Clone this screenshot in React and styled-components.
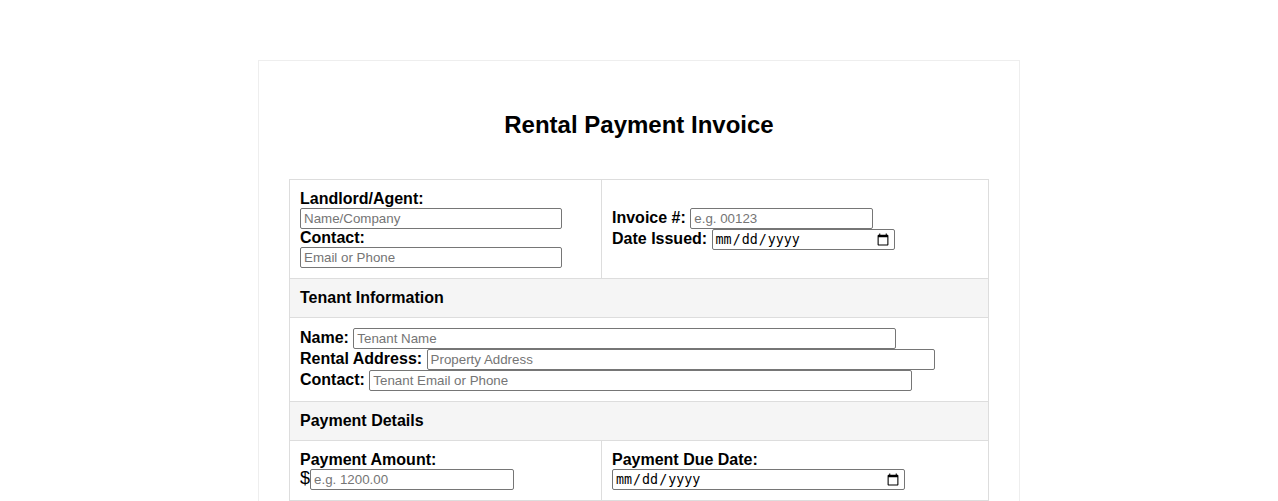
import styled, { createGlobalStyle } from 'styled-components';

const GlobalStyle = createGlobalStyle`
  body {
    margin: 0;
    font-family: "Liberation Sans", Arial, sans-serif;
    color: #000;
    background: #fff;
  }
`

const Page = styled.div`
  padding-top: 60px;
`

const Invoice = styled.div`
  width: 700px;
  margin: 0 auto;
  padding: 30px;
  border: 1px solid #eee;
`

const Title = styled.h2`
  text-align: center;
  font-size: 24px;
  font-weight: bold;
  margin: 20px 0 40px;
`

const Table = styled.table`
  width: 699px;
  border-collapse: collapse;
  table-layout: fixed;
`

const Col = styled.col`
  width: ${p => p.$w}px;
`

const Cell = styled.td`
  border: 1px solid #ddd;
  padding: 10px;
  vertical-align: middle;
  font-size: 16px;
`

const Section = styled.th`
  border: 1px solid #ddd;
  padding: 10px;
  background: #f5f5f5;
  text-align: left;
  font-size: 16px;
  font-weight: bold;
`

const Line = styled.div`
  display: block;
`

const Label = styled.label`
  font-weight: bold;
`

const TextInput = styled.input`
  width: ${p => p.$w};
  box-sizing: border-box;
  height: 21px;
  font-family: "Liberation Sans", Arial, sans-serif;
  font-size: 13.333px;
  padding: 1px 3px;
  border: 1px solid #767676;
  border-radius: 2px;
  vertical-align: baseline;

  &::placeholder {
    color: #757575;
  }
`

const DateInput = styled.input`
  width: ${p => p.$w};
  box-sizing: border-box;
  height: 21px;
  border: 1px solid #767676;
  border-radius: 2px;
  padding: 1px 2px;
`

const Dollar = styled.span`
  font-size: 18px;
  line-height: 1;
`

const App = () => {
  return (
    <Page>
      <GlobalStyle />
      <Invoice>
        <Title>Rental Payment Invoice</Title>
        <Table>
          <colgroup>
            <Col $w={312} />
            <Col $w={387} />
          </colgroup>
          <tbody>
            <tr>
              <Cell>
                <Line><Label>Landlord/Agent:</Label></Line>
                <Line><TextInput $w="90%" placeholder="Name/Company" /></Line>
                <Line><Label>Contact:</Label></Line>
                <Line><TextInput $w="90%" placeholder="Email or Phone" /></Line>
              </Cell>
              <Cell>
                <Line><Label>Invoice #:</Label> <TextInput $w="50%" placeholder="e.g. 00123" /></Line>
                <Line><Label>Date Issued:</Label> <DateInput type="date" $w="50%" /></Line>
              </Cell>
            </tr>
            <tr>
              <Section colSpan={2}>Tenant Information</Section>
            </tr>
            <tr>
              <Cell colSpan={2}>
                <Line><Label>Name:</Label> <TextInput $w="80%" placeholder="Tenant Name" /></Line>
                <Line><Label>Rental Address:</Label> <TextInput $w="75%" placeholder="Property Address" /></Line>
                <Line><Label>Contact:</Label> <TextInput $w="80%" placeholder="Tenant Email or Phone" /></Line>
              </Cell>
            </tr>
            <tr>
              <Section colSpan={2}>Payment Details</Section>
            </tr>
            <tr>
              <Cell>
                <Line><Label>Payment Amount:</Label></Line>
                <Line><Dollar>$</Dollar><TextInput $w="70%" placeholder="e.g. 1200.00" /></Line>
              </Cell>
              <Cell>
                <Line><Label>Payment Due Date:</Label></Line>
                <Line><DateInput type="date" $w="80%" /></Line>
              </Cell>
            </tr>
            <tr>
              <Cell>&nbsp;</Cell>
              <Cell>&nbsp;</Cell>
            </tr>
          </tbody>
        </Table>
      </Invoice>
    </Page>
  )
}

export default App
